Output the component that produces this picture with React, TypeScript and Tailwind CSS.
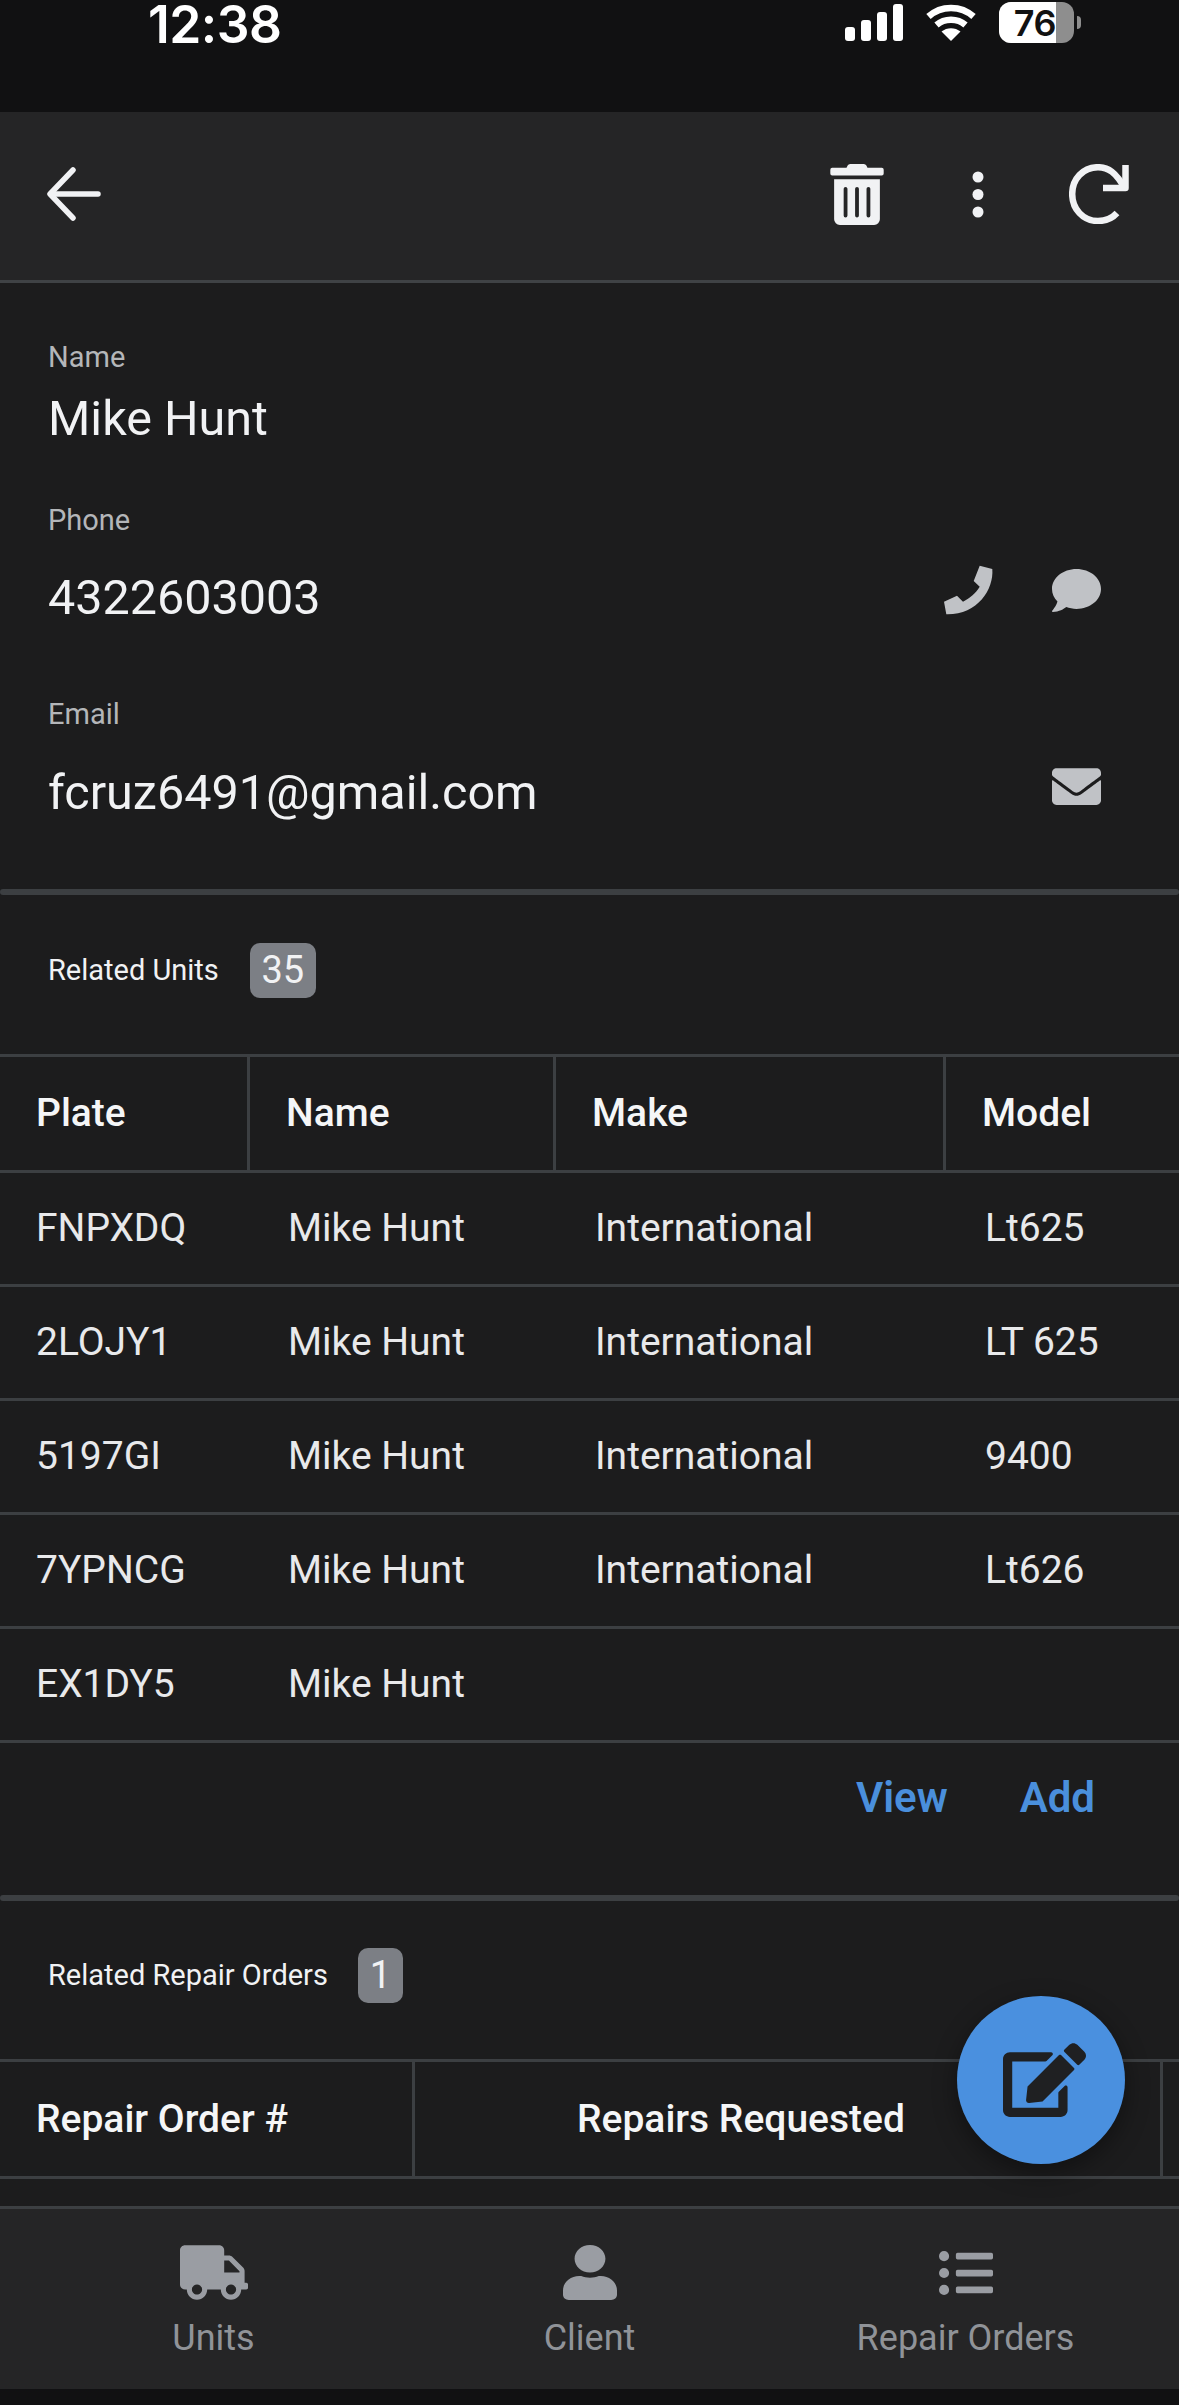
import React from "react";
import { FaTrashAlt, FaComment, FaEnvelope, FaTruck, FaUser, FaListUl, FaEdit } from "react-icons/fa";

const units = [
  ["FNPXDQ", "Mike Hunt", "International", "Lt625"],
  ["2LOJY1", "Mike Hunt", "International", "LT 625"],
  ["5197GI", "Mike Hunt", "International", "9400"],
  ["7YPNCG", "Mike Hunt", "International", "Lt626"],
  ["EX1DY5", "Mike Hunt", "", ""],
];

const Label = ({ children, className = "" }: { children: React.ReactNode; className?: string }) => (
  <div className={`text-[29px] leading-[32px] text-[#b4b6b9] ${className}`}>{children}</div>
);

const Value = ({ children, className = "" }: { children: React.ReactNode; className?: string }) => (
  <div className={`text-[48.5px] leading-[60px] text-[#f1f2f4] ${className}`}>{children}</div>
);

const Badge = ({ children, className = "" }: { children: React.ReactNode; className?: string }) => (
  <div className={`flex h-[55px] items-center justify-center rounded-[10px] bg-[#7c7f85] text-[38px] text-[#f1f2f4] ${className}`}>
    {children}
  </div>
);

const Divider = () => <div className="h-[6px] rounded-[4px] bg-[#3c3f42]" />;

const NavItem = ({ icon, label }: { icon: React.ReactNode; label: string }) => (
  <div className="flex w-[376px] flex-col items-center">
    <div className="flex h-[55px] items-center justify-center">{icon}</div>
    <div className="mt-[16px] text-[36px] leading-[44px] text-[#909398]">{label}</div>
  </div>
);

export default function App() {
  return (
    <div className="relative flex h-[2405px] w-[1179px] flex-col overflow-hidden bg-[#1c1c1d] font-['Roboto',sans-serif]">
      {/* status bar */}
      <div className="flex h-[112px] shrink-0 items-start justify-between bg-[#111112] pl-[148px] pr-[98px]">
        <div className="mt-[2px] font-['Inter',sans-serif] text-[51.5px] font-semibold leading-[44px] tracking-[-0.5px] text-white">12:38</div>
        <div className="flex items-start pt-[2px]">
          <svg width="58" height="38" viewBox="0 0 58 38" className="mt-[2px]" fill="#fff">
            <rect x="0" y="23" width="10" height="14" rx="3" />
            <rect x="16" y="16" width="10" height="21" rx="3" />
            <rect x="32" y="8" width="10" height="29" rx="3" />
            <rect x="48" y="0" width="10" height="37" rx="3" />
          </svg>
          <svg width="50" height="38" viewBox="0 0 50 38" className="ml-[23px] mt-[2px]" fill="none" stroke="#fff" strokeWidth="6.5">
            <path d="M2.5 12.5C15 1 35 1 47.5 12.5" />
            <path d="M10.5 21C18.5 14 31.5 14 39.5 21" />
            <path d="M25 37L15.5 27.5C21 23 29 23 34.5 27.5Z" fill="#fff" stroke="none" />
          </svg>
          <div className="relative ml-[23px] flex h-[41px] w-[75px] items-center overflow-hidden rounded-[12px] bg-[#8e8e8e]">
            <div className="flex h-full w-[57px] items-center justify-end bg-white font-['Inter',sans-serif] text-[36px] font-semibold leading-none tracking-[-0.5px] text-[#111]">76</div>
          </div>
          <div className="ml-[3px] mt-[14px] h-[13px] w-[4px] rounded-r-full bg-[#8e8e8e]" />
        </div>
      </div>

      {/* app bar */}
      <div className="relative flex h-[171px] shrink-0 items-center justify-between border-b-[3px] border-[#3f4245] bg-[#252526] pb-[4px] pl-[47px] pr-[50px] text-[#f1f2f4]">
        <svg width="54" height="54" viewBox="0 0 54 54" fill="none" stroke="#f1f2f4" strokeWidth="5.5" strokeLinecap="round" strokeLinejoin="round">
          <path d="M26 3L3 27L26 51" />
          <path d="M4 27H51" />
        </svg>
        <div className="flex items-center">
          <FaTrashAlt className="h-[61px] w-[54px]" />
          <svg width="12" height="47" viewBox="0 0 12 47" className="ml-[88px]" fill="#f1f2f4">
            <circle cx="6" cy="6" r="5.5" />
            <circle cx="6" cy="23.5" r="5.5" />
            <circle cx="6" cy="41" r="5.5" />
          </svg>
          <svg width="60" height="60" viewBox="0 0 60 60" className="ml-[85px]" fill="none" stroke="#f1f2f4" strokeWidth="6.5">
            <path d="M48 49C42 55.500 36 57 29 57C14 57 3.200 45 3.200 30C3.200 15 14 3.200 29 3.200C39 3.200 47 8 56 25" />
            <path d="M56.500 1V24H34" strokeLinejoin="round" />
          </svg>
        </div>
      </div>

      {/* scrolling body */}
      <div className="min-h-0 flex-1 overflow-hidden">
        <div className="px-[48px] pb-[66px] pt-[58px]">
          <Label>Name</Label>
          <Value className="mt-[16px]">Mike Hunt</Value>
          <Label className="mt-[55px]">Phone</Label>
          <div className="mt-[32px] flex items-center justify-between">
            <Value>4322603003</Value>
            <div className="mr-[30px] mt-[-16px] flex items-center">
              <svg width="50" height="50" viewBox="0 0 50 50" fill="#c0c2c6">
                <path d="M35.700 .7L48.300 4C50 25 33 50 2.300 49.300L0 36.700L13 30.700L19 36.700C26 33 32 28 35.700 21.700L29.700 16Z" />
              </svg>
              <FaComment className="ml-[58px] h-[49px] w-[49px] text-[#c0c2c6]" />
            </div>
          </div>
          <Label className="mt-[70px]">Email</Label>
          <div className="mt-[33px] flex items-center justify-between">
            <Value>fcruz6491@gmail.com</Value>
            <FaEnvelope className="mr-[30px] mt-[-14px] h-[49px] w-[49px] text-[#c0c2c6]" />
          </div>
        </div>
        <Divider />

        <div className="flex items-center pl-[48px] pt-[48px] text-[29px] text-[#f1f2f4]">
          <span>Related Units</span>
          <Badge className="ml-[31px] w-[66px]">35</Badge>
        </div>
        <div className="mt-[56px] border-t-[3px] border-[#3c3f42]">
          <div className="grid h-[116px] grid-cols-[247px_306px_390px_236px] border-b-[3px] border-[#3c3f42] text-[39px] font-medium text-[#f5f6f7]">
            <div className="flex items-center pl-[36px]">Plate</div>
            <div className="flex items-center border-l-[3px] border-[#3c3f42] pl-[36px]">Name</div>
            <div className="flex items-center border-l-[3px] border-[#3c3f42] pl-[36px]">Make</div>
            <div className="flex items-center border-l-[3px] border-[#3c3f42] pl-[36px]">Model</div>
          </div>
          {units.map((u) => (
            <div key={u[0]} className="grid h-[114px] grid-cols-[247px_306px_390px_236px] border-b-[3px] border-[#3c3f42] text-[39px] text-[#e8e9eb]">
              <div className="flex items-center pl-[36px]">{u[0]}</div>
              <div className="flex items-center pl-[41px]">{u[1]}</div>
              <div className="flex items-center pl-[42px]">{u[2]}</div>
              <div className="flex items-center pl-[42px]">{u[3]}</div>
            </div>
          ))}
        </div>
        <div className="flex h-[152px] items-start justify-end pr-[84px] pt-[30px] text-[42px] font-semibold leading-[50px] text-[#4a8fdc]">
          <span>View</span>
          <span className="ml-[72px]">Add</span>
        </div>
        <Divider />

        <div className="flex items-center pl-[48px] pt-[47px] text-[29px] text-[#f1f2f4]">
          <span>Related Repair Orders</span>
          <Badge className="ml-[30px] w-[45px]">1</Badge>
        </div>
        <div className="mt-[56px] border-t-[3px] border-[#3c3f42]">
          <div className="grid h-[117px] grid-cols-[412px_748px_19px] border-b-[3px] border-[#3c3f42] text-[39px] font-medium text-[#f5f6f7]">
            <div className="flex items-center pl-[36px]">Repair Order #</div>
            <div className="flex items-center border-l-[3px] border-[#3c3f42] pl-[162px]">Repairs Requested</div>
            <div className="border-l-[3px] border-[#3c3f42]" />
          </div>
        </div>
      </div>

      {/* bottom nav */}
      <div className="shrink-0 bg-[#111112]">
        <div className="flex h-[183px] justify-center border-t-[3px] border-[#3c3f42] bg-[#252526] pt-[36px]">
          <NavItem icon={<FaTruck className="h-[55px] w-[68px] text-[#9a9da3]" />} label="Units" />
          <NavItem icon={<FaUser className="h-[55px] w-[54px] text-[#9a9da3]" preserveAspectRatio="none" />} label="Client" />
          <NavItem icon={<FaListUl className="h-[54px] w-[54px] text-[#9a9da3]" />} label="Repair Orders" />
        </div>
        <div className="h-[16px]" />
      </div>

      {/* floating action button */}
      <div className="absolute left-[957px] top-[1996px] flex h-[168px] w-[168px] items-center justify-center rounded-full bg-[#4a90df] shadow-[0_8px_24px_rgba(0,0,0,0.4)]">
        <FaEdit className="ml-[6px] h-[74px] w-[83px] text-[#1f2022]" />
      </div>
    </div>
  );
}
